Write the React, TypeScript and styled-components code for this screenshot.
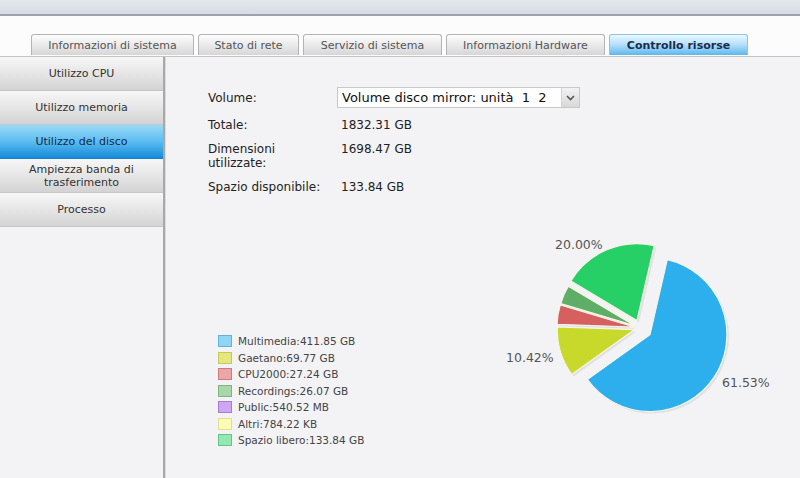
import styled, { createGlobalStyle, css } from 'styled-components';

const GlobalStyle = createGlobalStyle`
  html, body {
    margin: 0;
    padding: 0;
    background: #fbfbfc;
  }
  body {
    font-family: 'DejaVu Sans', Verdana, sans-serif;
    color: #333;
  }
`;

type Active = { $active?: boolean };

const Page = styled.div`
  width: 800px;
  height: 478px;
  display: flex;
  flex-direction: column;
  overflow: hidden;
`;

const TopBar = styled.div`
  height: 14px;
  background: linear-gradient(#e4e8ee, #d7dce4);
  border-bottom: 2px solid #9ea3ab;
`;

const TabStrip = styled.div`
  display: flex;
  gap: 4px;
  padding: 18px 0 0 31px;
  height: 22px;
  border-bottom: 1px solid #c4c4c4;
  background: #fcfcfc;
`;

const Tab = styled.div<Active & { $width: number }>`
  width: ${({ $width }) => $width}px;
  height: 21px;
  box-sizing: border-box;
  border: 1px solid #b4b4b4;
  border-bottom: none;
  border-radius: 3px 3px 0 0;
  display: flex;
  align-items: center;
  justify-content: center;
  font-size: 11px;
  color: #555;
  background: linear-gradient(#fdfdfd, #e6e6e6 60%, #d6d6d6);
  ${({ $active }) =>
    $active &&
    css`
      border-color: #8cc4e6;
      color: #1b2d4d;
      font-weight: bold;
      background: linear-gradient(#eaf8ff, #b8e2fa 45%, #5db7ec);
    `};
`;

const Body = styled.div`
  flex: 1;
  display: flex;
  background: #f3f3f5;
`;

const Sidebar = styled.div`
  width: 163px;
  flex-shrink: 0;
  border-right: 2px solid #a8a8a8;
  box-shadow: 1px 0 0 #dcdcdc;
`;

const SideItem = styled.div<Active>`
  height: 33px;
  border-bottom: 1px solid #c6c6c6;
  display: flex;
  align-items: center;
  justify-content: center;
  text-align: center;
  font-size: 11px;
  line-height: 13px;
  color: #333;
  background: linear-gradient(#f7f7f7, #e4e4e4 55%, #d3d3d3);
  ${({ $active }) =>
    $active &&
    css`
      color: #15294a;
      border-bottom-color: #1a7fc8;
      background: linear-gradient(#9ad9f7, #5bbdf0 50%, #168ad9);
    `};
`;

const Content = styled.div`
  flex: 1;
  padding: 30px 0 0 43px;
  display: flex;
  flex-direction: column;
`;

const InfoGrid = styled.div`
  display: grid;
  grid-template-columns: 129px 243px;
  row-gap: 10px;
  font-size: 12px;
  line-height: 14px;
  color: #222;
`;

const Label = styled.div<{ $center?: boolean }>`
  ${({ $center }) => $center && 'align-self: center;'}
`;

const Value = styled.div`
  padding-left: 4px;
`;

const Select = styled.div`
  height: 21px;
  box-sizing: border-box;
  border: 1px solid #c8c8c8;
  background: #fff;
  display: flex;
  align-items: center;
  padding-left: 4px;
  font-size: 13px;
  color: #111;
`;

const SelectText = styled.span`
  flex: 1;
  white-space: pre;
`;

const SelectArrow = styled.div`
  width: 17px;
  height: 19px;
  border-left: 1px solid #d4d4d4;
  background: linear-gradient(#f2f2f2, #d8d8d8);
  display: flex;
  align-items: center;
  justify-content: center;
`;

const ChartArea = styled.div`
  display: flex;
  margin-top: 25px;
`;

const Legend = styled.div`
  margin: 116px 0 0 10px;
  display: flex;
  flex-direction: column;
  gap: 4px;
`;

const LegendRow = styled.div`
  display: flex;
  align-items: center;
  gap: 6px;
  height: 12.5px;
  font-size: 10.5px;
  color: #444;
`;

const Swatch = styled.span<{ $fill: string; $line: string }>`
  width: 14px;
  height: 12px;
  box-sizing: border-box;
  background: ${({ $fill }) => $fill};
  border: 1px solid ${({ $line }) => $line};
`;

const PieSvg = styled.svg`
  margin-left: auto;
  flex-shrink: 0;
`;

const tabs = [
  { label: 'Informazioni di sistema', width: 163 },
  { label: 'Stato di rete', width: 101 },
  { label: 'Servizio di sistema', width: 139 },
  { label: 'Informazioni Hardware', width: 159 },
  { label: 'Controllo risorse', width: 139, active: true },
];

const sideItems = [
  'Utilizzo CPU',
  'Utilizzo memoria',
  'Utilizzo del disco',
  'Ampiezza banda di trasferimento',
  'Processo',
];

const legend = [
  { label: 'Multimedia:411.85 GB', fill: '#8fd6f4', line: '#62b4dc' },
  { label: 'Gaetano:69.77 GB', fill: '#e3e77c', line: '#c4c95a' },
  { label: 'CPU2000:27.24 GB', fill: '#eca6a6', line: '#cc7c7c' },
  { label: 'Recordings:26.07 GB', fill: '#a8d8aa', line: '#7fb583' },
  { label: 'Public:540.52 MB', fill: '#cfa6f2', line: '#a57ed0' },
  { label: 'Altri:784.22 KB', fill: '#fcfcb4', line: '#e0e090' },
  { label: 'Spazio libero:133.84 GB', fill: '#94e8b4', line: '#62c68a' },
];

// slices: degrees clockwise from 12 o'clock
const slices = [
  { from: 13, to: 234.5, color: '#2cafec', out: 12 },
  { from: 234.5, to: 272, color: '#c9d92c', out: 6 },
  { from: 272, to: 286.7, color: '#d65f5f', out: 6 },
  { from: 286.7, to: 300.7, color: '#5fae68', out: 6 },
  { from: 300.7, to: 301, color: '#b77de8', out: 6 },
  { from: 301, to: 373, color: '#27d067', out: 8 },
];

const CX = 140;
const CY = 109;
const R = 77;

const rad = (a: number) => (a * Math.PI) / 180;

const slicePath = (from: number, to: number, out: number, dx = 0, dy = 0) => {
  const mid = rad((from + to) / 2);
  const cx = CX + out * Math.sin(mid) + dx;
  const cy = CY - out * Math.cos(mid) + dy;
  const x1 = cx + R * Math.sin(rad(from));
  const y1 = cy - R * Math.cos(rad(from));
  const x2 = cx + R * Math.sin(rad(to));
  const y2 = cy - R * Math.cos(rad(to));
  const large = to - from > 180 ? 1 : 0;
  return `M${cx.toFixed(1)} ${cy.toFixed(1)} L${x1.toFixed(1)} ${y1.toFixed(1)} A${R} ${R} 0 ${large} 1 ${x2.toFixed(1)} ${y2.toFixed(1)} Z`;
};

const Pie = () => (
  <PieSvg width='300' height='200' viewBox='0 0 300 200'>
    {slices.map((s, i) => (
      <path key={'sh' + i} d={slicePath(s.from, s.to, s.out, 2, 2)} fill='rgba(0,0,0,0.07)' />
    ))}
    {slices.map((s, i) => (
      <path key={i} d={slicePath(s.from, s.to, s.out)} fill={s.color} stroke='#f5f6e6' strokeWidth='1.2' />
    ))}
    <g fontFamily="'DejaVu Sans', Verdana, sans-serif" fontSize='12.5' fill='#555'>
      <text x='55' y='30'>20.00%</text>
      <text x='6' y='143'>10.42%</text>
      <text x='222' y='168'>61.53%</text>
    </g>
  </PieSvg>
);

export default function App() {
  return (
    <>
      <GlobalStyle />
      <Page>
        <TopBar />
        <TabStrip>
          {tabs.map((t) => (
            <Tab key={t.label} $width={t.width} $active={t.active}>
              {t.label}
            </Tab>
          ))}
        </TabStrip>
        <Body>
          <Sidebar>
            {sideItems.map((s) => (
              <SideItem key={s} $active={s === 'Utilizzo del disco'}>
                {s === 'Ampiezza banda di trasferimento' ? (
                  <span>
                    Ampiezza banda di
                    <br />
                    trasferimento
                  </span>
                ) : (
                  s
                )}
              </SideItem>
            ))}
          </Sidebar>
          <Content>
            <InfoGrid>
              <Label $center>Volume:</Label>
              <Select>
                <SelectText>Volume disco mirror: unità  1  2</SelectText>
                <SelectArrow>
                  <svg width='9' height='6' viewBox='0 0 9 6'>
                    <path d='M1 1 L4.5 4.5 L8 1' fill='none' stroke='#555' strokeWidth='1.6' />
                  </svg>
                </SelectArrow>
              </Select>
              <Label>Totale:</Label>
              <Value>1832.31 GB</Value>
              <Label>
                Dimensioni
                <br />
                utilizzate:
              </Label>
              <Value>1698.47 GB</Value>
              <Label>Spazio disponibile:</Label>
              <Value>133.84 GB</Value>
            </InfoGrid>
            <ChartArea>
              <Legend>
                {legend.map((l) => (
                  <LegendRow key={l.label}>
                    <Swatch $fill={l.fill} $line={l.line} />
                    {l.label}
                  </LegendRow>
                ))}
              </Legend>
              <Pie />
            </ChartArea>
          </Content>
        </Body>
      </Page>
    </>
  );
}
